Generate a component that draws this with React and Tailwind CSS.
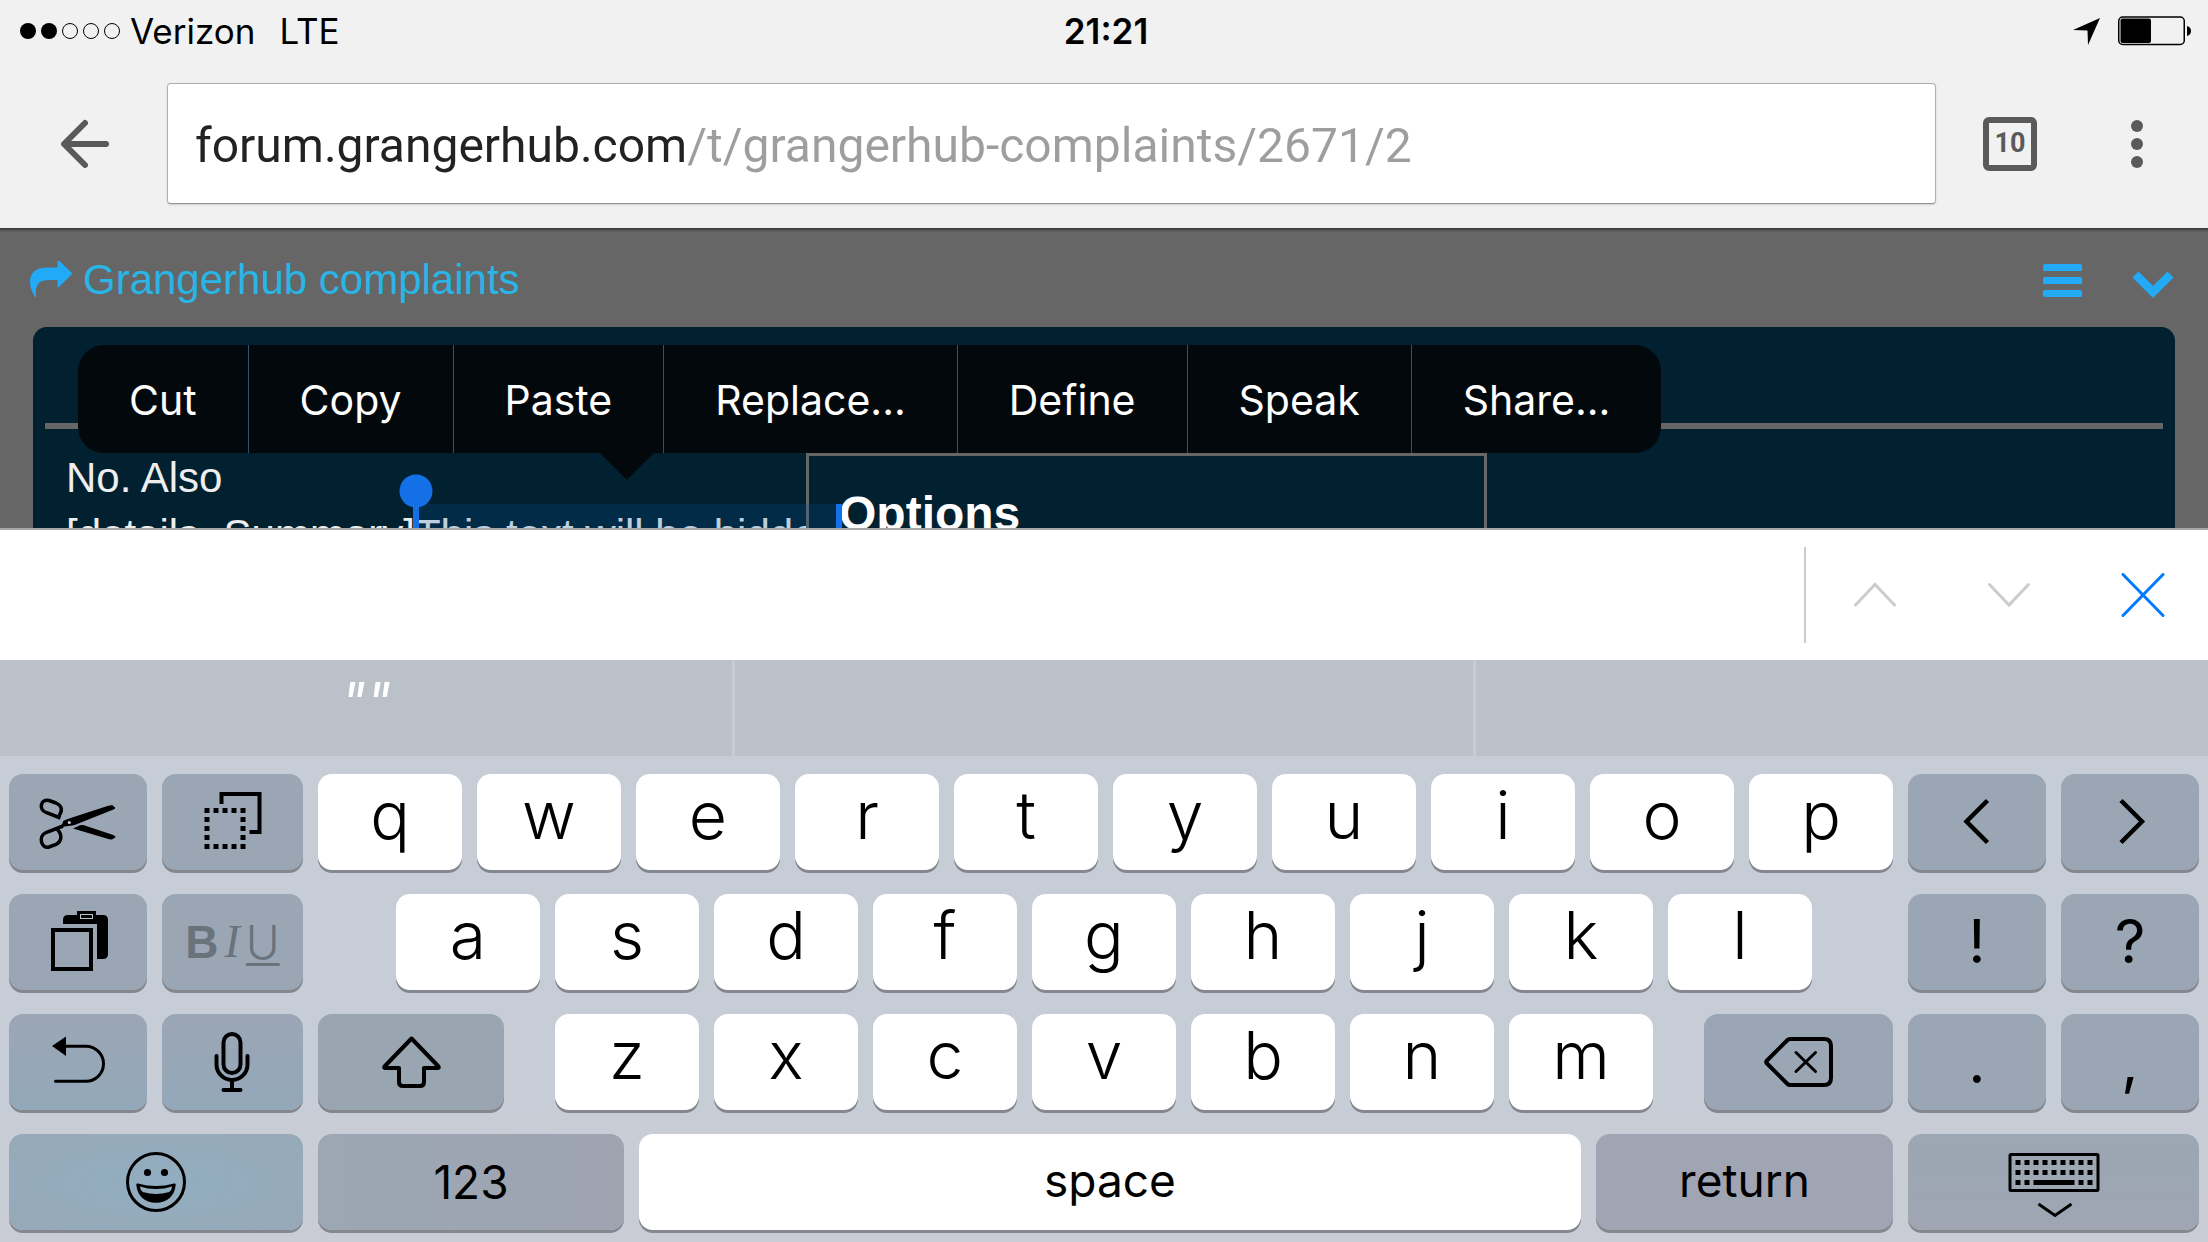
import { useState } from "react";

const MENU_ITEMS = ["Cut", "Copy", "Paste", "Replace...", "Define", "Speak", "Share..."];
const DOT_STEPS = [0, 1, 2, 3, 4];
const KEY_COLUMNS = [0, 1, 2, 3, 4, 5, 6, 7, 8];

/* ---------- icons ---------- */

// every keycap icon is drawn in the same 96px square
function KeyIcon({ children }) {
  return (
    <svg className="h-24 w-24 shrink-0" viewBox="0 0 96 96" fill="none" stroke="#000" strokeWidth="4" aria-hidden="true">
      {children}
    </svg>
  );
}

function ScissorsIcon() {
  return (
    <KeyIcon>
      <path d="M30.5 44 L16 38.5 C8 35 11 24.500 19 26.500 L26 29 C33 32 32 38 29 41.500" strokeWidth="3.500" />
      <path d="M33 52 L16 58.500 C8 62 11 75 19 73 L26 70.500 C32 67.500 32.500 60.500 27 55" strokeWidth="3.500" />
      <path
        d="M31 53 L33.300 47 Q34.500 46 38.300 44.800 L78.300 31.700 Q81 31 82.500 31.300 L85.300 33.800 Q85.300 34.800 83.500 35.500 L44 51.300 Z"
        fill="#000"
        stroke="none"
      />
      <path
        d="M43 54.600 L50 51.300 Q52 50.700 54 51.300 L83.300 61 L85.700 62.700 Q85.500 64 81.700 65.400 Q80 65.700 78.300 65 Z"
        fill="#000"
        stroke="none"
      />
      <circle cx="39.300" cy="48.500" r="1.500" fill="#c9d1d9" stroke="none" />
    </KeyIcon>
  );
}

function CopyIcon() {
  return (
    <KeyIcon>
      <path d="M36.500 30V20h38v38H64.500" />
      <g fill="#000" stroke="none">
        {DOT_STEPS.map((row) =>
          DOT_STEPS.filter((col) => row === 0 || row === 4 || col === 0 || col === 4).map((col) => (
            <rect key={`${row}-${col}`} x={19.5 + col * 9} y={34 + row * 9} width="5" height="5" />
          ))
        )}
      </g>
    </KeyIcon>
  );
}

function PasteIcon() {
  return (
    <KeyIcon>
      <path d="M33 30v-4q0-5 5-5h9v-4h19v4h7q5 0 5 5v34q0 5-5 5h-6V30z" fill="#000" stroke="none" />
      <rect x="50.500" y="20.500" width="12" height="4" stroke="#b9c2cc" strokeWidth="1" />
      <rect x="23" y="36" width="38" height="39" />
    </KeyIcon>
  );
}

function UndoIcon() {
  return (
    <KeyIcon>
      <path d="M22 32l14-9.500v19.500z" fill="#000" stroke="none" />
      <path d="M35 32.300h21a17.500 17.500 0 0 1 0 35H25.500" strokeWidth="3" strokeLinecap="round" />
    </KeyIcon>
  );
}

function MicIcon() {
  return (
    <KeyIcon>
      <rect x="38.500" y="20" width="17" height="39" rx="8.500" />
      <path d="M31.500 42v8.500a15.500 15.500 0 0 0 31 0V42M47 66v10M38.500 76h17" strokeLinecap="round" />
    </KeyIcon>
  );
}

function ShiftIcon() {
  return (
    <KeyIcon>
      <path
        d="M48.500 24.500L21.500 52.500q-1 1.500 1 1.500H36v14q0 4 4 4h17q4 0 4-4V54h13.500q2 0 1-1.500z"
        strokeLinejoin="round"
      />
    </KeyIcon>
  );
}

function BackspaceIcon() {
  return (
    <KeyIcon>
      <path d="M39 25h34q7 0 7 7v32q0 7-7 7H39q-1.500 0-2.500-1L16 49.500q-1.500-1.500 0-3L36.500 26q1-1 2.500-1z" />
      <path d="M45 38.500l19.500 19M64.500 38.500l-19.500 19" strokeWidth="3" strokeLinecap="round" />
    </KeyIcon>
  );
}

function EmojiIcon() {
  return (
    <KeyIcon>
      <circle cx="48" cy="48" r="28.500" strokeWidth="3" />
      <g fill="#000" stroke="none">
        <circle cx="39.500" cy="38.500" r="3.600" />
        <circle cx="56.500" cy="38.500" r="3.600" />
        <path
          fillRule="evenodd"
          d="M28.300 50.500q0-1.500 1.700-1Q48 54.500 66 49.500q1.700-.5 1.700 1C67 62 59 68.700 48 68.700S29 62 28.300 50.500zM31.800 52.500q.5 3.500 3 5.500Q48 62 61.200 58q2.500-2 3-5.500Q48 57.500 31.800 52.500z"
        />
      </g>
    </KeyIcon>
  );
}

function HideKeyboardIcon() {
  return (
    <KeyIcon>
      <rect x="4" y="20.500" width="88" height="36" rx="1" strokeWidth="3" />
      <g fill="#000" stroke="none">
        {KEY_COLUMNS.map((col) => (
          <rect key={`a${col}`} x={9.5 + col * 9} y="26" width="5" height="5" />
        ))}
        {KEY_COLUMNS.map((col) => (
          <rect key={`b${col}`} x={9.5 + col * 9} y="36" width="5" height="5" />
        ))}
        {[0, 1, 7, 8].map((col) => (
          <rect key={`c${col}`} x={9.5 + col * 9} y="46" width="5" height="5" />
        ))}
        <rect x="27.500" y="46" width="41" height="5" />
      </g>
      <path d="M32.500 70L49 81.500 65.500 70" strokeWidth="3" />
    </KeyIcon>
  );
}

/* ---------- keyboard ---------- */

function Key({ label, dark, className = "", children }) {
  return (
    <button
      type="button"
      aria-label={label}
      className={`flex h-24 min-w-0 items-center justify-center overflow-hidden rounded-[14px] shadow-[0_3px_0_#84888e] ${
        dark ? "" : "bg-white"
      } ${className}`}
    >
      {children}
    </button>
  );
}

function LetterKey({ letter }) {
  return (
    <Key label={letter} className="flex-1 pb-3.5 text-[66px] leading-none font-[350]">
      {letter}
    </Key>
  );
}

function Keyboard() {
  const row = "grid grid-cols-[138fr_141fr_1575fr_138fr_138fr] gap-[15px]";

  return (
    <div className="flex flex-col gap-6 bg-[linear-gradient(to_bottom,#c7cdd6_70%,#c9ccd5)] px-[9px] pt-[18px] pb-3">
      <div className={row}>
        <Key label="Cut" dark className="bg-[#9ba6b4]"><ScissorsIcon /></Key>
        <Key label="Copy" dark className="bg-[#9ba6b4]"><CopyIcon /></Key>
        <div className="flex gap-[15px]">
          {[..."qwertyuiop"].map((l) => <LetterKey key={l} letter={l} />)}
        </div>
        <Key label="Move left" dark className="bg-[#9ba6b4]">
          <KeyIcon><path d="M58.500 26.500L37.500 47.500l21 21" strokeWidth="4.500" /></KeyIcon>
        </Key>
        <Key label="Move right" dark className="bg-[#9ba6b4]">
          <KeyIcon><path d="M39 26.500l21 21-21 21" strokeWidth="4.500" /></KeyIcon>
        </Key>
      </div>

      <div className={row}>
        <Key label="Paste" dark className="bg-[#9ba6b4]"><PasteIcon /></Key>
        <Key label="Text style" dark className="gap-1.5 bg-[#9ba6b4] text-[46px] leading-none text-[#69737c]">
          <span className="font-[Liberation_Sans,sans-serif] font-bold">B</span>
          <span className="font-[Liberation_Serif,serif] italic">I</span>
          <span className="font-light underline decoration-[3px] underline-offset-4">U</span>
        </Key>
        <div className="flex gap-[15px] pr-[81px] pl-[78px]">
          {[..."asdfghjkl"].map((l) => <LetterKey key={l} letter={l} />)}
        </div>
        <Key dark className="bg-[#9ba6b4] pb-0.5 text-[60px] leading-none">!</Key>
        <Key dark className="bg-[#9ba6b4] pb-0.5 text-[60px] leading-none">?</Key>
      </div>

      <div className={row}>
        <Key label="Undo" dark className="bg-linear-to-b from-[#9ba6b5] to-[#93a8b9]"><UndoIcon /></Key>
        <Key label="Dictate" dark className="bg-linear-to-b from-[#9ba6b5] to-[#93a8b9]"><MicIcon /></Key>
        <div className="flex gap-[15px]">
          <Key label="Shift" dark className="flex-[186] bg-[#9aa5b2]"><ShiftIcon /></Key>
          <div className="mx-9 flex flex-[1098] gap-[15px]">
            {[..."zxcvbnm"].map((l) => <LetterKey key={l} letter={l} />)}
          </div>
          <Key label="Backspace" dark className="flex-[189] bg-[#9aa6b4]"><BackspaceIcon /></Key>
        </div>
        <Key dark className="bg-[#9ba6b4] pb-0.5 text-[60px] leading-none">.</Key>
        <Key dark className="bg-[#9ba6b4] pb-0.5 text-[60px] leading-none">,</Key>
      </div>

      <div className={row}>
        <Key label="Emoji" dark className="col-span-2 bg-[radial-gradient(ellipse_at_center,#91adc0,#97a9b8)]">
          <EmojiIcon />
        </Key>
        <div className="flex gap-[15px]">
          <Key dark className="flex-[306] bg-linear-to-r from-[#9ba7b3] to-[#9fa4b1] text-[46px] leading-none">123</Key>
          <Key className="flex-[942] pb-1 text-[46px] leading-none">space</Key>
          <Key dark className="flex-[297] bg-[#9fa5b2] pb-1 text-[46px] leading-none">return</Key>
        </div>
        <Key label="Hide keyboard" dark className="col-span-2 bg-linear-to-b from-[#9ba7b3] to-[#9fa5b3]">
          <HideKeyboardIcon />
        </Key>
      </div>
    </div>
  );
}

/* ---------- browser chrome ---------- */

function StatusBar() {
  return (
    <div className="grid h-[60px] grid-cols-3 items-center pt-0.5 pr-4 pl-5 text-[35px] leading-none text-black">
      <div className="flex items-center">
        <svg className="mr-2.5 h-4 w-[100px]" viewBox="0 0 100 16" aria-hidden="true">
          <circle cx="8" cy="8" r="8" />
          <circle cx="29" cy="8" r="8" />
          <circle cx="50" cy="8" r="7.500" fill="none" stroke="#000" />
          <circle cx="71" cy="8" r="7.500" fill="none" stroke="#000" />
          <circle cx="92" cy="8" r="7.500" fill="none" stroke="#000" />
        </svg>
        <span>Verizon</span>
        <span className="ml-6">LTE</span>
      </div>
      <span className="text-center font-semibold">21:21</span>
      <div className="flex items-center justify-end gap-[18px]">
        <svg className="h-[27px] w-[27px]" viewBox="0 0 27 27" aria-hidden="true">
          <path d="M27 0L15 27l-.5-14.500L0 12z" />
        </svg>
        <svg className="h-[30px] w-[74px]" viewBox="0 0 74 30" aria-hidden="true">
          <rect x=".75" y="1" width="65.500" height="27.500" rx="4" fill="none" stroke="#000" strokeWidth="1.500" />
          <rect x="2.500" y="2.500" width="30.500" height="24.500" rx="2" />
          <path d="M69 10q4 1 4 5t-4 5z" />
        </svg>
      </div>
    </div>
  );
}

function Toolbar() {
  const [url, setUrl] = useState("forum.grangerhub.com/t/grangerhub-complaints/2671/2");

  return (
    <div className="flex items-center pt-[23px] pr-[65px] pb-6 pl-[58px]">
      <button type="button" aria-label="Back">
        <svg className="h-[54px] w-[54px]" viewBox="0 0 54 54" fill="none" stroke="#5a5a5a" strokeWidth="6" strokeLinecap="round" strokeLinejoin="round" aria-hidden="true">
          <path d="M27 6L6 27l21 21M7 27h41" />
        </svg>
      </button>
      <div className="ml-[55px] flex h-[121px] flex-1 items-center rounded-[4px] border border-[#b0b0b0] border-b-[#949494] bg-white px-[27px] pt-[5px] shadow-[0_1px_2px_rgba(0,0,0,0.15)]">
        {/* host is dark, the rest of the path is grey */}
        <input
          type="text"
          aria-label="Address"
          value={url}
          onChange={(e) => setUrl(e.target.value)}
          className="w-full bg-[linear-gradient(to_right,#222_490px,#9e9e9e_490px)] bg-clip-text font-[Roboto,sans-serif] text-[48px] leading-[60px] text-transparent outline-none"
        />
      </div>
      <button
        type="button"
        aria-label="Tabs"
        className="ml-[47px] flex h-[54px] w-[54px] items-center justify-center rounded-md border-6 border-[#5a5a5a] font-[Roboto,sans-serif] text-[27px] leading-none font-bold text-[#5a5a5a]"
      >
        10
      </button>
      <button type="button" aria-label="Menu" className="ml-[94px]">
        <svg className="h-[54px] w-3" viewBox="0 0 12 54" fill="#5a5a5a" aria-hidden="true">
          <circle cx="6" cy="9" r="6" />
          <circle cx="6" cy="27" r="6" />
          <circle cx="6" cy="45" r="6" />
        </svg>
      </button>
    </div>
  );
}

/* ---------- forum page ---------- */

function ContextMenu() {
  return (
    <div className="absolute top-[18px] left-[45px] z-20 flex h-[108px] rounded-[26px] bg-[#03080d] font-[Inter,sans-serif] text-[41px] leading-none text-white">
      {MENU_ITEMS.map((item) => (
        <button key={item} type="button" className="border-l border-[#34536a] px-[51px] pt-0.5 first:border-l-0">
          {item}
        </button>
      ))}
      <svg className="absolute top-full left-[522px] h-[27px] w-[54px]" viewBox="0 0 54 27" fill="#03080d" aria-hidden="true">
        <path d="M0 0h54L27 27z" />
      </svg>
    </div>
  );
}

function Composer() {
  return (
    <div className="relative mx-[33px] min-h-0 flex-1 rounded-t-[14px] bg-[#022130] px-3">
      <hr className="mt-24 border-t-6 border-[#666]" />
      <div className="mt-5 px-[21px] text-[42px] leading-[57px] whitespace-nowrap text-[#eee]">
        <p>No. Also</p>
        <p>[details=Summary]This text will be hidden</p>
      </div>

      <div className="absolute top-[126px] left-[773px] h-60 w-[681px] border-3 border-[#666] bg-[#022130] px-[30px] pt-7">
        <h3 className="text-[48px] leading-[60px] font-bold text-white">Options</h3>
      </div>

      {/* text selection and its drag handle */}
      <div className="absolute top-[177px] left-[383px] h-12 w-[426px] border-r-6 border-[#1470e6] bg-[rgba(0,83,163,0.2)]" />
      <svg className="absolute top-[147px] left-[366px] h-[78px] w-[34px]" viewBox="0 0 34 78" fill="#1470e6" aria-hidden="true">
        <circle cx="17" cy="17" r="16.500" />
        <path d="M14 30h6v48h-6z" />
      </svg>

      <ContextMenu />
    </div>
  );
}

function ForumPage() {
  return (
    <main className="flex min-h-0 flex-1 flex-col overflow-hidden bg-[#666] font-[Liberation_Sans,Arial,sans-serif] shadow-[inset_0_5px_3px_-3px_rgba(0,0,0,0.45)]">
      <div className="flex h-[99px] shrink-0 items-center pr-[34px] pl-[30px]">
        <a href="#topic" className="flex items-center gap-[11px] pt-1 text-[42px] leading-[60px] text-[#29b5e6]">
          <svg className="h-[38px] w-[42px]" viewBox="0 0 42 38" fill="#22aaf7" aria-hidden="true">
            <path d="M27.500 0q0-1.500 1.500-.5l12.500 12q1 1 0 2L29 26q-1.500 1-1.500-.5V19H20C9 19 5 23 6 35.500q-.5 1.500-1.500 0Q0 27 0 21.500C0 9.500 8 6.500 19 6.500h8.500z" />
          </svg>
          Grangerhub complaints
        </a>
        <button type="button" aria-label="Toggle toolbar" className="ml-auto pt-1">
          <svg className="h-[34px] w-10" viewBox="0 0 40 34" fill="#22aaf7" aria-hidden="true">
            <rect width="39" height="7" y="1" rx="1.500" />
            <rect width="39" height="7" y="14" rx="1.500" />
            <rect width="39" height="7" y="27" rx="1.500" />
          </svg>
        </button>
        <button type="button" aria-label="Minimise" className="ml-[49px] pt-[15px]">
          <svg className="h-7 w-[42px]" viewBox="0 0 42 28" fill="none" stroke="#22aaf7" strokeWidth="8.500" aria-hidden="true">
            <path d="M3.500 3.500L21 21 38.500 3.500" />
          </svg>
        </button>
      </div>
      <Composer />
    </main>
  );
}

function FindBar() {
  return (
    <div className="flex h-[132px] shrink-0 items-center border-t-2 border-[#a8a8a8] bg-white pr-[43px]">
      <input type="text" aria-label="Find in page" className="h-full min-w-0 flex-1 px-6 text-[42px] outline-none" />
      <div className="mr-[47px] h-24 w-0.5 bg-[#ccc]" />
      <div className="flex gap-[90px]">
        <button type="button" aria-label="Previous" disabled>
          <svg className="h-11 w-11" viewBox="0 0 44 44" fill="none" stroke="#ccc" strokeWidth="3" strokeLinecap="round" aria-hidden="true">
            <path d="M2.500 32L22 11.500 41.500 32" />
          </svg>
        </button>
        <button type="button" aria-label="Next" disabled>
          <svg className="h-11 w-11" viewBox="0 0 44 44" fill="none" stroke="#ccc" strokeWidth="3" strokeLinecap="round" aria-hidden="true">
            <path d="M2.500 11.500L22 32l19.500-20.500" />
          </svg>
        </button>
        <button type="button" aria-label="Close">
          <svg className="h-11 w-11" viewBox="0 0 44 44" fill="none" stroke="#007aff" strokeWidth="3" strokeLinecap="round" aria-hidden="true">
            <path d="M2 1.500l40 41M42 1.500l-40 41" />
          </svg>
        </button>
      </div>
    </div>
  );
}

function Suggestions() {
  return (
    <div className="grid h-24 shrink-0 grid-cols-[735fr_741fr_732fr] divide-x-3 divide-[#c7cdd6] bg-[#bac1c9]">
      <button type="button" className="pb-3 text-[54px] leading-none text-white italic">&quot;&quot;</button>
      <button type="button" aria-label="Second suggestion" />
      <button type="button" aria-label="Third suggestion" />
    </div>
  );
}

function App() {
  return (
    <div className="flex h-screen flex-col overflow-hidden font-[Inter,sans-serif]">
      <header className="shrink-0 bg-[#f1f1f1]">
        <StatusBar />
        <Toolbar />
      </header>
      <ForumPage />
      <FindBar />
      <Suggestions />
      <Keyboard />
    </div>
  );
}

export default App;
